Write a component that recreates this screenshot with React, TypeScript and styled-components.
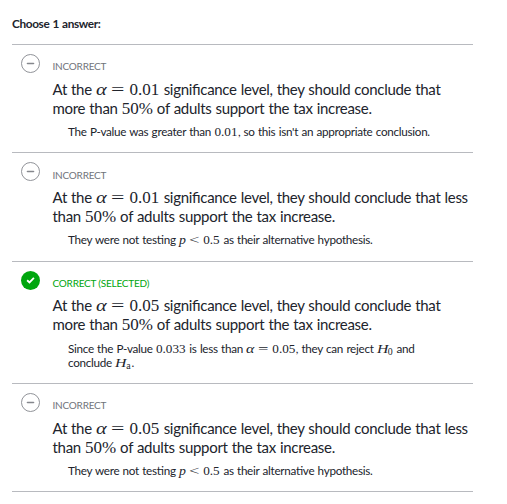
import React from "react";
import styled, { createGlobalStyle } from "styled-components";

const GlobalStyle = createGlobalStyle`
  * { box-sizing: border-box; }
  body {
    margin: 0;
    background: #fff;
    color: #21242c;
    font-family: Lato, "Noto Sans", sans-serif;
    font-feature-settings: "liga" 1;
  }
`;

const Page = styled.main`
  width: 473px;
  padding: 16px 0 0 12px;
`;

const Heading = styled.h1`
  margin: 0;
  height: 28px;
  font-size: 11.8px;
  letter-spacing: -0.36px;
  word-spacing: 0.6px;
  line-height: 16px;
  font-weight: 700;
`;

const List = styled.ul`
  list-style: none;
  margin: 0;
  padding: 0;
  border-bottom: 1px solid #b8babf;
`;

const Choice = styled.li<{ $height: number }>`
  display: flex;
  height: ${(p) => p.$height}px;
  border-top: 1px solid #b8babf;
  padding: 9px 0 0 9px;
`;

const Badge = styled.svg`
  flex: none;
  width: 19px;
  height: 19px;
`;

const Content = styled.div`
  flex: none;
  width: 425px;
  margin-left: 12.5px;
`;

const Status = styled.div<{ $correct?: boolean; $top: number }>`
  height: 26px;
  padding-top: ${(p) => p.$top}px;
  font-size: 10px;
  letter-spacing: -0.22px;
  line-height: 16px;
  color: ${(p) => (p.$correct ? "#00a60e" : "#71747a")};
`;

const Answer = styled.div<{ $raised?: boolean }>`
  margin-top: ${(p) => (p.$raised ? -1 : 0)}px;
  padding-bottom: ${(p) => (p.$raised ? 1 : 0)}px;
  font-size: 15px;
  letter-spacing: -0.3px;
  word-spacing: 0.5px;
  line-height: 19px;
  white-space: nowrap;
`;

const Rationale = styled.div`
  margin: 6px 0 0 15.5px;
  font-size: 11.7px;
  letter-spacing: -0.29px;
  word-spacing: 0.6px;
  line-height: 14px;
  white-space: nowrap;
`;

const Line = styled.div`
  height: 1lh;
`;

const Maths = styled.span<{ $small?: boolean }>`
  display: inline-flex;
  align-items: baseline;
  font-family: "Liberation Serif", serif;
  font-size: ${(p) => (p.$small ? 13.2 : 17)}px;
  letter-spacing: 0;
  line-height: 1;
`;

const Digits = styled.span<{ $em: number }>`
  width: ${(p) => p.$em}em;
`;

const Relation = styled.span`
  width: 0.778em;
  margin: 0 0.278em;
  text-align: center;
  transform: scaleX(1.4);
`;

const Variable = styled.i<{ $em: number; $stretch?: number }>`
  width: ${(p) => p.$em}em;
  transform: scaleX(${(p) => p.$stretch ?? 1});
  transform-origin: left;
`;

const Subscript = styled.span`
  width: 0.54em;
  font-size: 0.75em;
  position: relative;
  top: 0.2em;
`;

const Alpha = ({ value, small }: { value: string; small?: boolean }) => (
  <Maths $small={small}>
    <Variable $em={0.64} $stretch={1.2}>α</Variable>
    <Relation>=</Relation>
    <Digits $em={1.778}>{value}</Digits>
  </Maths>
);

const Hypothesis = ({ index }: { index: string }) => (
  <Maths $small>
    <Variable $em={0.83} $stretch={1.2}>H</Variable>
    <Subscript>{index}</Subscript>
  </Maths>
);

const Percent = () => (
  <Maths>
    <Digits $em={1.833}>50%</Digits>
  </Maths>
);

const Mark = ({ correct }: { correct?: boolean }) => (
  <Badge viewBox="0 0 19 19" aria-hidden="true">
    {correct ? (
      <>
        <circle cx="9.5" cy="9.5" r="9.5" fill="#00a60e" />
        <path d="M6.1 9.3 8.5 11.4 12.9 6.9" fill="none" stroke="#fff" strokeWidth="1.8" />
      </>
    ) : (
      <>
        <circle cx="9.5" cy="9.5" r="9" fill="#fff" stroke="#85878d" strokeWidth="0.9" />
        <path d="M6.5 9.5H12.5" stroke="#85878d" strokeWidth="1.6" strokeLinecap="round" />
      </>
    )}
  </Badge>
);

const NotTesting = () => (
  <Line>
    They were not testing{" "}
    <Maths $small>
      <Variable $em={0.503} $stretch={1.05}>p</Variable>
      <Relation>&lt;</Relation>
      <Digits $em={1.278}>0.5</Digits>
    </Maths>{" "}
    as their alternative hypothesis.
  </Line>
);

type Item = {
  height: number;
  statusTop: number;
  alpha: string;
  less?: boolean;
  correct?: boolean;
  why: React.ReactNode;
};

const items: Item[] = [
  {
    height: 108,
    statusTop: 4,
    alpha: "0.01",
    why: (
      <Line>
        The P-value was greater than{" "}
        <Maths $small><Digits $em={1.778}>0.01</Digits></Maths>, so this isn't an appropriate conclusion.
      </Line>
    ),
  },
  { height: 109, statusTop: 5, alpha: "0.01", less: true, why: <NotTesting /> },
  {
    height: 122,
    statusTop: 4,
    alpha: "0.05",
    correct: true,
    why: (
      <>
        <Line>
          Since the P-value <Maths $small><Digits $em={2.278}>0.033</Digits></Maths> is less than{" "}
          <Alpha value="0.05" small />, they can reject <Hypothesis index="0" /> and
        </Line>
        <Line>
          conclude <Hypothesis index="a" />.
        </Line>
      </>
    ),
  },
  { height: 108, statusTop: 4, alpha: "0.05", less: true, why: <NotTesting /> },
];

export default function App() {
  return (
    <>
      <GlobalStyle />
      <Page>
        <Heading>Choose 1 answer:</Heading>
        <List>
          {items.map((item, i) => (
            <Choice key={i} $height={item.height}>
              <Mark correct={item.correct} />
              <Content>
                <Status $correct={item.correct} $top={item.statusTop}>
                  {item.correct ? "CORRECT (SELECTED)" : "INCORRECT"}
                </Status>
                <Answer $raised={item.correct}>
                  <Line>
                    At the <Alpha value={item.alpha} /> significance level, they should conclude that
                    {item.less && " less"}
                  </Line>
                  <Line>
                    {item.less ? "than " : "more than "}
                    <Percent /> of adults support the tax increase.
                  </Line>
                </Answer>
                <Rationale>{item.why}</Rationale>
              </Content>
            </Choice>
          ))}
        </List>
      </Page>
    </>
  );
}
